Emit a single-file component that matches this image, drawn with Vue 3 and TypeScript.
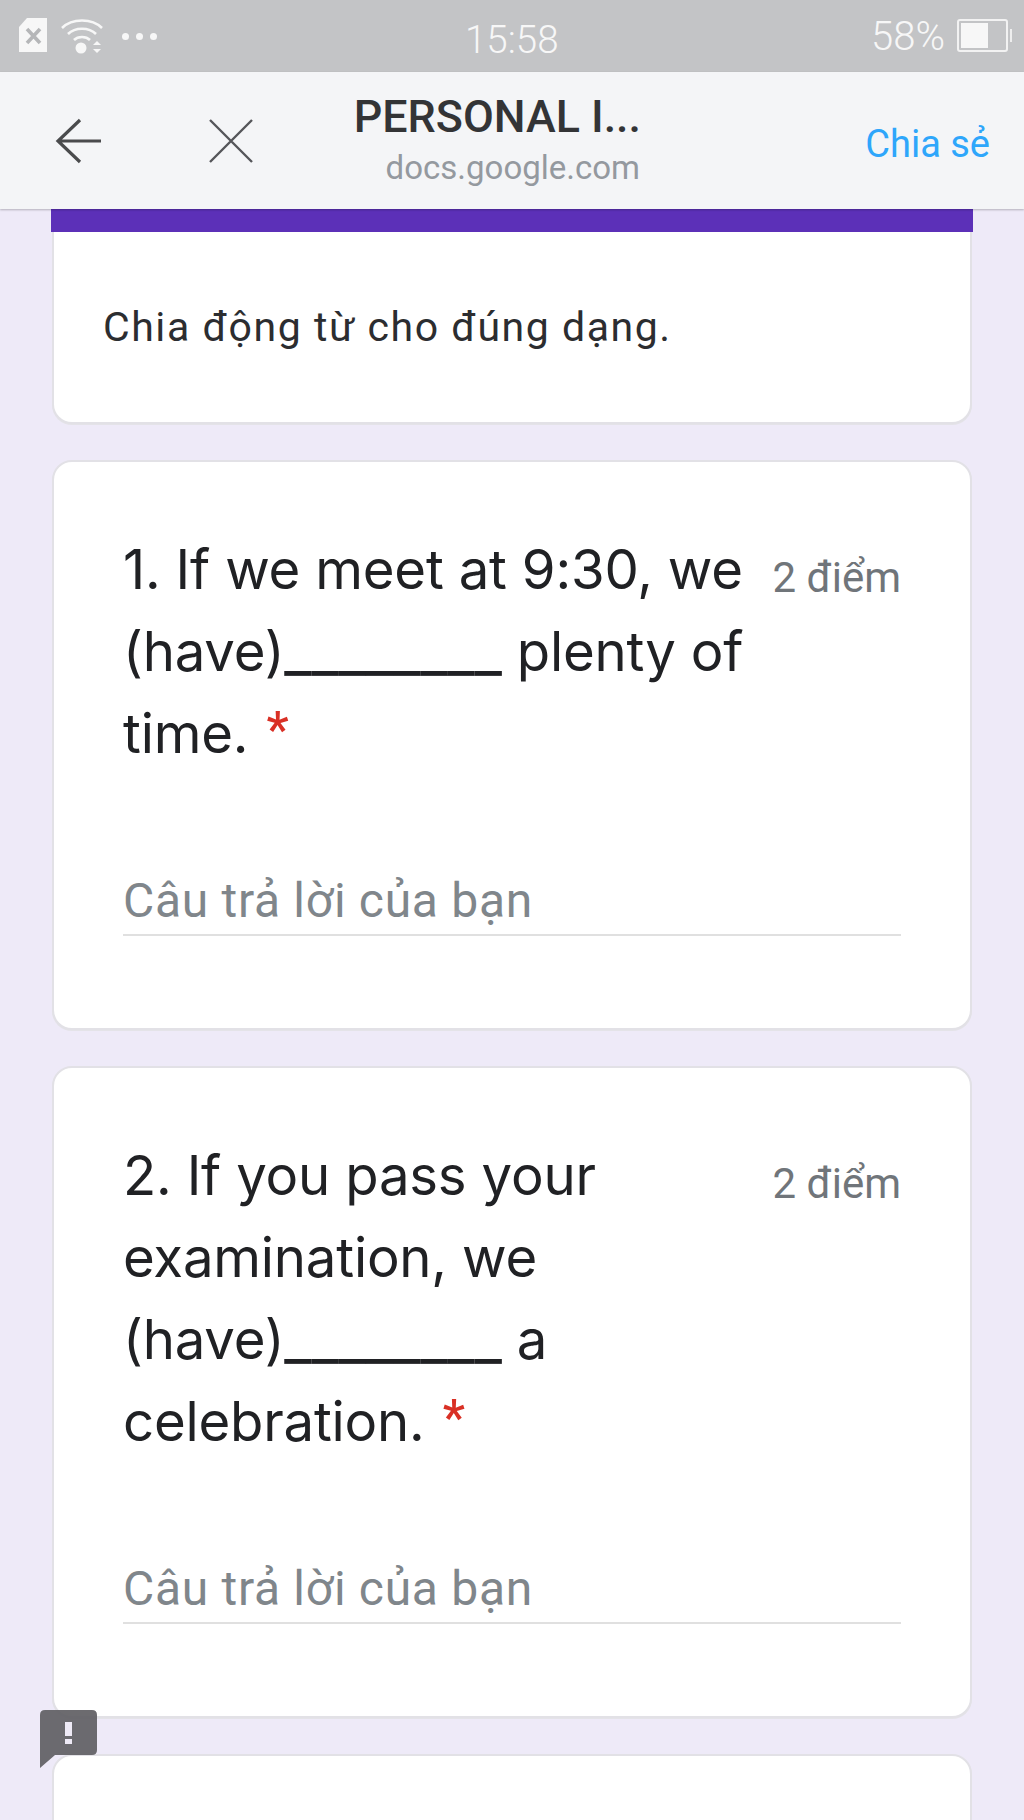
<script setup lang="ts">
interface Question {
  lines: string[]
  points: string
}

const questions: Question[] = [
  { lines: ['1. If we meet at 9:30, we', '(have)________ plenty of', 'time.'], points: '2 điểm' },
  { lines: ['2. If you pass your', 'examination, we', '(have)________ a', 'celebration.'], points: '2 điểm' }
]

// keeps the blanks apart so they can be sized on their own
const parts = (line: string) => line.split(/(_+)/)
</script>

<template>
  <div class="page">
    <div class="status">
      <div class="status-left">
        <svg width="28" height="36" viewBox="0 0 28 36">
          <path d="M8 0H28V34H0V9Z" fill="#f7f7f7" />
          <path d="M8 11L21 25M21 11L8 25" stroke="#b5b6b8" stroke-width="3.6" fill="none" />
        </svg>
        <svg width="42" height="36" viewBox="0 0 42 36">
          <path d="M1 10C11 0 31 0 41 10M7 16C14 9 28 9 35 16M13 22C17 18 25 18 29 22" stroke="#f7f7f7" stroke-width="2.6" fill="none" />
          <circle cx="20" cy="30" r="5.5" fill="#f7f7f7" />
          <path d="M32 27L36 23L40 27ZM32 31L36 35L40 31Z" fill="#f7f7f7" />
        </svg>
        <div class="dots"><i></i><i></i><i></i></div>
      </div>
      <div class="clock">15:58</div>
      <div class="status-right">
        <span>58%</span>
        <svg width="56" height="34" viewBox="0 0 56 34">
          <rect x="1" y="1" width="49" height="31" rx="2" fill="none" stroke="#f2f2f2" stroke-width="2" />
          <rect x="4" y="4" width="27" height="25" fill="#f7f7f7" />
          <rect x="53" y="10" width="2" height="13" fill="#eeeeee" />
        </svg>
      </div>
    </div>

    <header class="toolbar">
      <div class="tool-icons">
        <svg width="48" height="48" viewBox="0 0 48 48">
          <path d="M3 24H46M25 3L3 24L25 45" fill="none" stroke="#4a4b4d" stroke-width="3.2" />
        </svg>
        <svg width="46" height="46" viewBox="0 0 46 46">
          <path d="M2 2L44 44M44 2L2 44" fill="none" stroke="#55565a" stroke-width="2.4" />
        </svg>
      </div>
      <div class="titles">
        <div class="title">PERSONAL I...</div>
        <div class="url">docs.google.com</div>
      </div>
      <div class="share">Chia sẻ</div>
    </header>

    <main class="form">
      <section class="card intro">
        <div class="bar"></div>
        <p>Chia động từ cho đúng dạng.</p>
      </section>

      <section v-for="q in questions" :key="q.lines[0]" class="card question">
        <div class="head">
          <div class="q-text">
            <div v-for="(line, i) in q.lines" :key="i">
              <span
                v-for="(part, j) in parts(line)"
                :key="j"
                :class="{ blank: part.startsWith('_') }"
              >{{ part }}</span><span v-if="i === q.lines.length - 1" class="req"> *</span>
            </div>
          </div>
          <div class="points">{{ q.points }}</div>
        </div>
        <div class="answer">Câu trả lời của bạn</div>
      </section>

      <section class="card last"></section>
    </main>

    <div class="report">
      <svg width="57" height="58" viewBox="0 0 57 58">
        <path d="M5 0H52Q57 0 57 5V40Q57 45 52 45H15L0 58V5Q0 0 5 0Z" fill="#616064" fill-opacity="0.93" />
        <rect x="25" y="12" width="7" height="14" fill="#eeeaf6" />
        <rect x="25" y="29" width="7" height="5" fill="#eeeaf6" />
      </svg>
    </div>
  </div>
</template>

<style>
body {
  margin: 0;
  background: #eeeaf8;
}
</style>

<style scoped>
.page {
  position: relative;
  width: 1024px;
  height: 1820px;
  overflow: hidden;
  background: #eeeaf8;
  font-family: Roboto, sans-serif;
}

.status {
  height: 72px;
  box-sizing: border-box;
  background: #c3c4c6;
  color: #f7f7f7;
  display: flex;
  align-items: center;
  justify-content: space-between;
  padding: 0 11px 0 19px;
  position: relative;
}

.status-left {
  display: flex;
  align-items: center;
  gap: 14px;
}

.dots {
  display: flex;
  gap: 7px;
  margin-left: 5px;
}

.dots i {
  width: 7px;
  height: 7px;
  border-radius: 50%;
  background: #f7f7f7;
}

.clock {
  position: absolute;
  left: 465px;
  top: 18px;
  font-size: 38.5px;
  line-height: 44px;
  font-weight: 300;
}

.status-right {
  display: flex;
  align-items: center;
  gap: 12px;
  font-size: 40px;
  font-weight: 300;
}

.toolbar {
  position: relative;
  z-index: 2;
  height: 137px;
  box-sizing: border-box;
  background: #f4f5f7;
  box-shadow: 0 1px 2px rgba(0, 0, 0, 0.25);
  display: flex;
  align-items: center;
  padding: 0 34px 0 55px;
}

.tool-icons {
  display: flex;
  align-items: center;
  gap: 105px;
  width: 271px;
}

.titles {
  width: 315px;
  text-align: right;
  margin-top: 3px;
}

.title {
  font-size: 44.8px;
  line-height: 50px;
  font-weight: 500;
  color: #333436;
}

.url {
  font-size: 33px;
  line-height: 51px;
  color: #94999f;
  margin-right: 1px;
}

.share {
  margin-left: auto;
  font-size: 38px;
  color: #2ea6fb;
  margin-top: 7px;
}

.form {
  padding: 0 51px;
  display: flex;
  flex-direction: column;
  gap: 36px;
}

.card {
  background: #fff;
  border: 2px solid #e2e1e6;
  border-radius: 20px;
  box-sizing: border-box;
  box-shadow: 0 1px 0 #e4e3e8;
}

.intro {
  height: 215px;
  border-top: none;
  border-radius: 0 0 20px 20px;
  margin: 0 1px;
}

.bar {
  height: 23px;
  background: #5c30b8;
  margin: 0 -3px;
}

.intro p {
  margin: 0;
  padding: 71px 0 0 49px;
  font-size: 41px;
  line-height: 48px;
  letter-spacing: 1.55px;
  color: #2c2d30;
}

.question {
  margin: 0 1px;
  padding: 66px 69px 0 69px;
}

.question:nth-of-type(2) {
  height: 570px;
}

.question:nth-of-type(3) {
  height: 652px;
}

.head {
  display: flex;
  justify-content: space-between;
  align-items: flex-start;
}

.q-text {
  font-family: Inter, sans-serif;
  font-size: 54.5px;
  line-height: 82px;
  letter-spacing: -0.2px;
  color: #202124;
  white-space: nowrap;
}

.blank {
  font-size: 60px;
  line-height: 0;
}

.req {
  color: #d93025;
  font-family: Roboto, sans-serif;
  font-size: 50px;
  font-weight: 500;
  line-height: 0;
  vertical-align: 6px;
  margin-left: 6px;
}

.points {
  font-size: 42px;
  line-height: 48px;
  color: #70757a;
  margin-top: 26px;
}

.answer {
  margin-top: 99px;
  font-size: 48px;
  line-height: 56px;
  color: #80868b;
  padding-bottom: 5px;
  border-bottom: 2px solid #e0e0e0;
  letter-spacing: 0.7px;
}

.last {
  height: 200px;
  margin: 0 1px;
}

.report {
  position: absolute;
  left: 40px;
  top: 1710px;
  width: 57px;
  height: 58px;
}

.report svg {
  display: block;
}
</style>
